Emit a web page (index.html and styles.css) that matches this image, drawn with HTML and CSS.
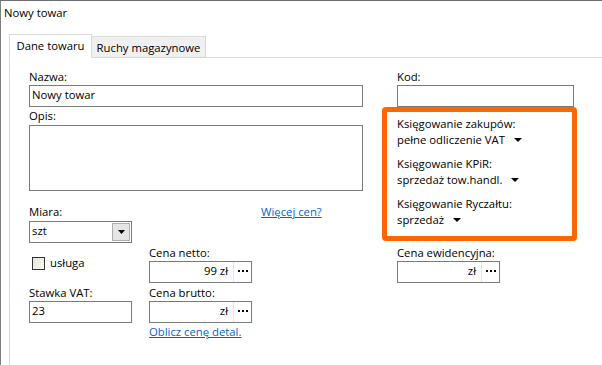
FILE: index.html
```html
<!DOCTYPE html>
<html lang="pl">
<head>
<meta charset="utf-8">
<title>Nowy towar</title>
<link rel="stylesheet" href="styles.css">
</head>
<body>
<div class="window">
  <div class="titlebar">Nowy towar</div>
  <div class="tabs">
    <div class="tab tab-active">Dane towaru</div>
    <div class="tab tab-inactive">Ruchy magazynowe</div>
  </div>
  <div class="panel">
    <div class="left">
      <div class="lbl">Nazwa:</div>
      <div class="input">Nowy towar</div>
      <div class="lbl lbl-opis">Opis:</div>
      <div class="input textarea"></div>
      <div class="lower">
        <div class="lbl cell-miara">Miara:</div>
        <a class="link cell-more" href="#">Więcej cen?</a>
        <div class="combo cell-combo">
          <span class="combo-val">szt</span>
          <span class="combo-btn"><svg width="7" height="4" viewBox="0 0 7 4"><polygon points="0,0 7,0 3.5,4" fill="#000"/></svg></span>
        </div>
        <div class="check-row cell-check">
          <span class="checkbox"></span>
          <span>usługa</span>
        </div>
        <div class="lbl cell-netto-lbl">Cena netto:</div>
        <div class="money cell-netto">
          <span class="money-val">99 zł</span>
          <span class="money-btn"><svg width="10" height="2" viewBox="0 0 10 2"><rect x="0" y="0" width="2" height="2"/><rect x="4" y="0" width="2" height="2"/><rect x="8" y="0" width="2" height="2"/></svg></span>
        </div>
        <div class="lbl cell-vat-lbl">Stawka VAT:</div>
        <div class="lbl cell-brutto-lbl">Cena brutto:</div>
        <div class="input cell-vat">23</div>
        <div class="money cell-brutto">
          <span class="money-val">zł</span>
          <span class="money-btn"><svg width="10" height="2" viewBox="0 0 10 2"><rect x="0" y="0" width="2" height="2"/><rect x="4" y="0" width="2" height="2"/><rect x="8" y="0" width="2" height="2"/></svg></span>
        </div>
        <a class="link cell-calc" href="#">Oblicz cenę detal.</a>
      </div>
    </div>
    <div class="right">
      <div class="lbl indent">Kod:</div>
      <div class="input indent kod-input"></div>
      <div class="orange">
        <div class="acct">
          <div class="acct-lbl">Księgowanie zakupów:</div>
          <div class="acct-val">pełne odliczenie VAT <svg class="arrow" width="8" height="4" viewBox="0 0 8 4"><polygon points="0,0 8,0 4,4" fill="#000"/></svg></div>
        </div>
        <div class="acct">
          <div class="acct-lbl">Księgowanie KPiR:</div>
          <div class="acct-val">sprzedaż tow.handl. <svg class="arrow" width="8" height="4" viewBox="0 0 8 4"><polygon points="0,0 8,0 4,4" fill="#000"/></svg></div>
        </div>
        <div class="acct">
          <div class="acct-lbl">Księgowanie Ryczałtu:</div>
          <div class="acct-val">sprzedaż <svg class="arrow" width="8" height="4" viewBox="0 0 8 4"><polygon points="0,0 8,0 4,4" fill="#000"/></svg></div>
        </div>
      </div>
      <div class="lbl indent ewid-lbl">Cena ewidencyjna:</div>
      <div class="money indent">
        <span class="money-val">zł</span>
        <span class="money-btn"><svg width="10" height="2" viewBox="0 0 10 2"><rect x="0" y="0" width="2" height="2"/><rect x="4" y="0" width="2" height="2"/><rect x="8" y="0" width="2" height="2"/></svg></span>
      </div>
    </div>
  </div>
</div>
</body>
</html>
```
FILE: styles.css
```css
* { box-sizing: border-box; }
html, body { margin: 0; padding: 0; }
body {
  width: 602px;
  height: 365px;
  overflow: hidden;
  background: #fff;
  font-family: "Open Sans", "Noto Sans", sans-serif;
  font-size: 11.3px;
  line-height: 16px;
  color: #000;
}
.window {
  height: 365px;
  border-top: 1px solid #6e6e6e;
  border-left: 1px solid #7f7f7f;
  display: flex;
  flex-direction: column;
}
.titlebar {
  height: 33px;
  padding: 4px 0 0 3px;
}
.tabs {
  display: flex;
  align-items: flex-end;
  height: 23px;
  margin-left: 8px;
}
.tab {
  text-align: center;
  white-space: nowrap;
  border: 1px solid #d9d9d9;
  border-bottom: none;
}
.tab-active {
  position: relative;
  width: 83px;
  height: 24px;
  margin-bottom: -1px;
  padding-top: 3px;
  background: #fff;
}
.tab-inactive {
  width: 114px;
  height: 21px;
  padding-top: 3px;
  border-left: none;
  background: #f0f0f0;
}
.panel {
  flex: 1;
  margin-left: 8px;
  border-top: 1px solid #d9d9d9;
  border-left: 1px solid #d9d9d9;
  padding: 11px 0 0 19px;
  display: flex;
  gap: 19px;
}
.left {
  width: 334px;
  display: flex;
  flex-direction: column;
}
.right {
  width: 195px;
  display: flex;
  flex-direction: column;
}
.lbl {
  height: 16px;
  white-space: nowrap;
}
.lbl-opis { margin-top: 1px; margin-bottom: 1px; }
.input {
  height: 22px;
  border: 1px solid #7a7a7a;
  padding: 0 2px;
  line-height: 17px;
}
.textarea { height: 66px; }
.lower {
  display: grid;
  grid-template-columns: 120px 112px 1fr;
  margin-top: 13px;
}
.cell-miara { grid-column: 1; grid-row: 1; }
.cell-more { grid-column: 3; grid-row: 1; justify-self: start; }
.cell-combo { grid-column: 1; grid-row: 2; margin-top: 1px; }
.cell-check { grid-column: 1; grid-row: 3 / span 2; }
.cell-netto-lbl { grid-column: 2; grid-row: 3; margin-top: 2px; }
.cell-netto { grid-column: 2; grid-row: 4; }
.cell-vat-lbl { grid-column: 1; grid-row: 5; margin-top: 2px; }
.cell-brutto-lbl { grid-column: 2; grid-row: 5; margin-top: 2px; }
.cell-vat { grid-column: 1; grid-row: 6; width: 103px; }
.cell-brutto { grid-column: 2; grid-row: 6; }
.cell-calc { grid-column: 2; grid-row: 7; justify-self: start; margin-top: 1px; white-space: nowrap; }
.link {
  color: #0066cc;
  text-decoration: underline;
  height: 16px;
  white-space: nowrap;
}
.combo {
  display: flex;
  width: 103px;
  height: 22px;
  border: 1px solid #7a7a7a;
}
.combo-val {
  flex: 1;
  padding-left: 2px;
  line-height: 17px;
}
.combo-btn {
  width: 18px;
  margin: 1px;
  border: 1px solid #adadad;
  background: #e5e5e5;
  display: flex;
  align-items: center;
  justify-content: center;
}
.check-row {
  display: flex;
  gap: 5px;
  padding-left: 3px;
  margin-top: 12px;
  align-items: flex-start;
}
.checkbox {
  width: 13px;
  height: 13px;
  margin-top: 2px;
  border: 1px solid #333;
  background: linear-gradient(135deg, #e4e4d6, #fbfbf7);
}
.money {
  display: flex;
  width: 103px;
  height: 22px;
  border: 1px solid #7a7a7a;
}
.money-val {
  flex: 1;
  text-align: right;
  padding-right: 5px;
  line-height: 17px;
}
.money-btn {
  width: 18px;
  border-left: 1px solid #e6e6e6;
  display: flex;
  align-items: center;
  justify-content: center;
  padding-bottom: 2px;
}
.indent { margin-left: 15px; }
.kod-input { width: 177px; }
.orange {
  height: 134px;
  border: 5px solid #ff6600;
  border-radius: 4px;
  padding: 4px 0 8px 10px;
  display: flex;
  flex-direction: column;
  gap: 8px;
}
.acct-lbl, .acct-val {
  height: 16px;
  white-space: nowrap;
}
.arrow {
  margin-left: 6px;
  vertical-align: 2px;
}
.ewid-lbl { margin-top: 4px; }
```
